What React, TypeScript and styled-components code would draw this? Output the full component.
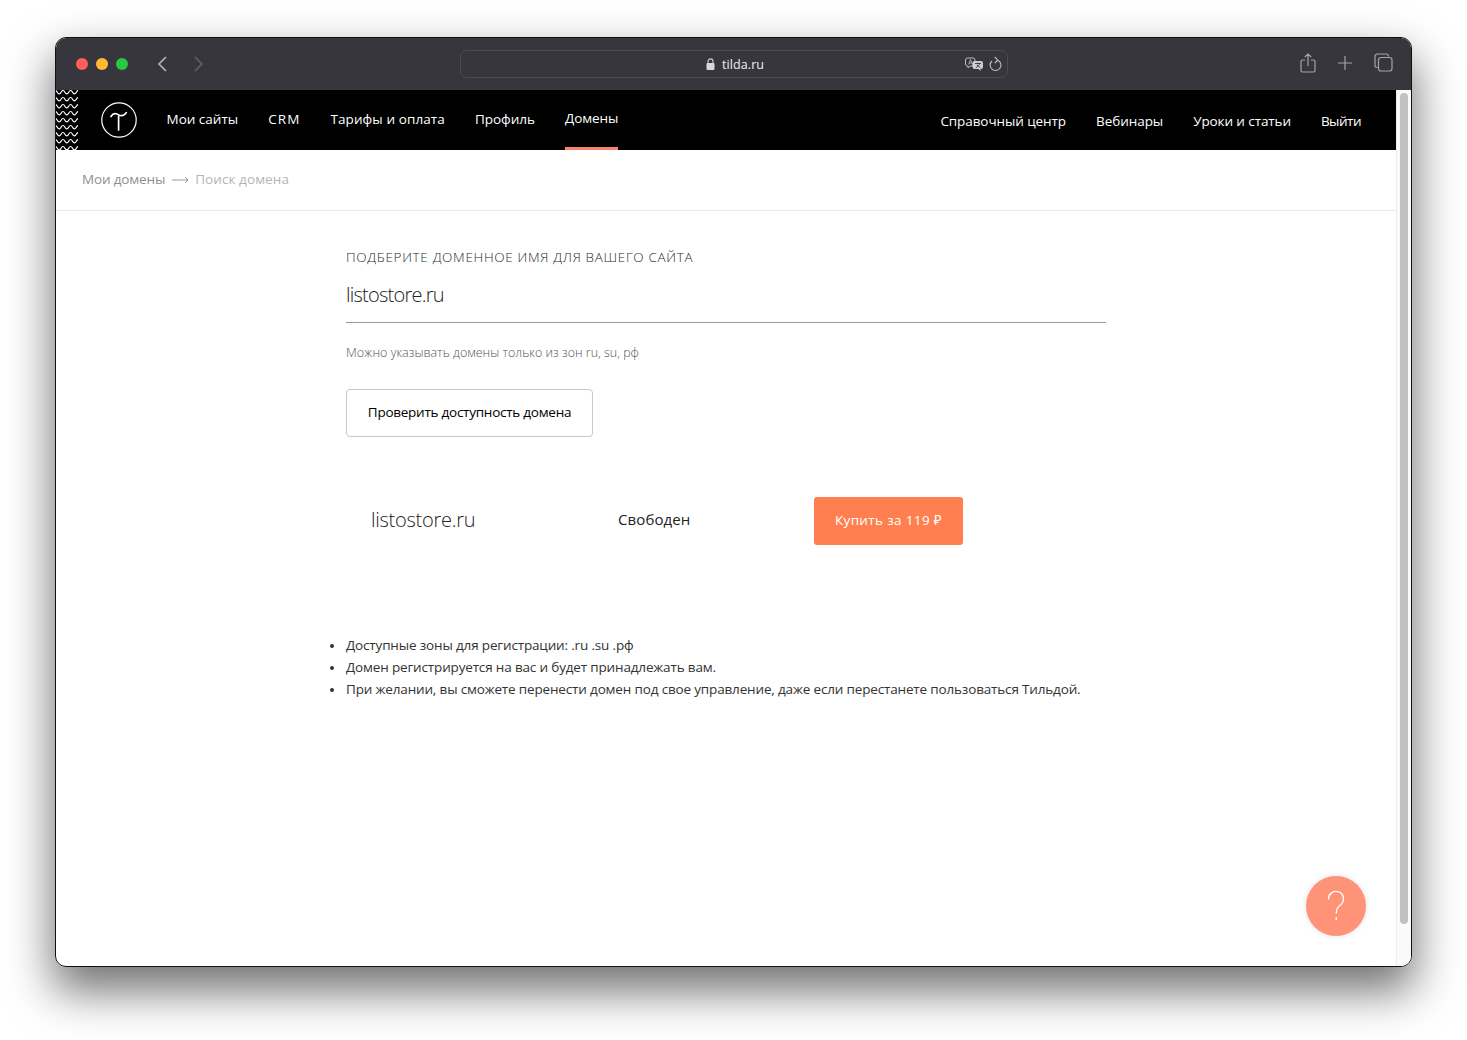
import React from 'react';
import styled, { createGlobalStyle } from 'styled-components';

const Global = createGlobalStyle`
  html, body { margin: 0; padding: 0; background: #fff; }
  body { font-family: "Open Sans", "Noto Sans", sans-serif; }
  * { box-sizing: border-box; }
`;
const font = `"Open Sans", "Noto Sans", sans-serif`;

const Page = styled.div`
  width: 1467px; height: 1040px; padding: 37px 55px 73px; overflow: hidden; background: #fff;
`;
const Win = styled.div`
  position: relative; width: 1357px; height: 930px; border-radius: 11px; overflow: hidden;
  border: 1px solid #111; background: #fff;
`;
const Shadow = styled.div`
  width: 1357px; height: 930px; border-radius: 11px;
  box-shadow: 0 22px 46px 2px rgba(0,0,0,.56);
`;
const TitleBar = styled.div`
  height: 52px; background: #38363d; display: grid; grid-template-columns: 404px 548px 1fr; align-items: center;
`;
const Left = styled.div`display: flex; align-items: center; padding-left: 20px;`;
const Dot = styled.span<{ $c: string }>`
  width: 12px; height: 12px; border-radius: 50%; background: ${p => p.$c}; margin-right: 8px;
`;
const NavArrows = styled.div`display: flex; gap: 19px; margin-left: 19px; margin-bottom: 1px;`;
const UrlBar = styled.div`
  height: 28px; border: 1px solid #4d4b52; border-radius: 7px; display: flex; align-items: center;
  position: relative; justify-content: center; color: #f1f1f1; font: 500 12.5px ${font};
`;
const UrlCenter = styled.div`display: flex; align-items: center; gap: 7px; margin-left: 2px; letter-spacing: .1px;`;
const UrlIcons = styled.div`position: absolute; right: 5px; top: 5px; display: flex; gap: 6px; align-items: center;`;
const Tools = styled.div`display: flex; align-items: center; justify-content: flex-end; gap: 22px; padding: 0 18px 3px 0;`;
const Body = styled.div`display: flex; height: 876px;`;
const Content = styled.div`flex: 1; min-width: 0; display: flex; flex-direction: column; position: relative;`;
const Scrollbar = styled.div`
  width: 15px; background: #fafafa; border-left: 1px solid #ececec; padding: 3px 3px 0 3px;
`;
const Thumb = styled.div`width: 8px; height: 831px; border-radius: 4px; background: #c1c1c1;`;
const TopNav = styled.nav`
  height: 60px; flex: none; background: #000; display: flex; align-items: center;
  padding-right: 35px; color: #fff; font: 500 13.5px ${font};
`;
const Waves = styled.svg`width: 22px; height: 60px; flex: none;`;
const Logo = styled.svg`width: 36px; height: 36px; margin: 0 30px 0 22.5px; flex: none;`;
const NavLeft = styled.div`display: flex; gap: 30px; height: 100%; flex: 1;`;
const NavRight = styled.div`display: flex; gap: 30px; height: 100%;`;
const NavItem = styled.a<{ $active?: boolean; $low?: boolean; $ls: number }>`
  position: relative; display: flex; align-items: center; padding-top: ${p => p.$low ? 2 : 0}px; padding-bottom: ${p => p.$low ? 0 : 2}px;
  white-space: nowrap; letter-spacing: ${p => p.$ls}px;
  border-bottom: ${p => p.$active ? '3px solid #fa8669' : '0'};
`;
const Crumbs = styled.div`
  height: 61px; flex: none; border-bottom: 1px solid #e8e8e8; display: flex; align-items: center; padding: 0 0 2px 26px;
  font: 500 13.5px ${font}; color: #8f8f8f; letter-spacing: -.15px;
`;
const CrumbArrow = styled.svg`width: 17px; height: 8px; margin: 1px 6px 0 7px;`;
const CrumbNow = styled.span`color: #b4b4b4; letter-spacing: .08px;`;
const Main = styled.main`padding: 36px 0 0 290px; flex: 1;`;
const Label = styled.div`
  font: 300 13.5px/20px ${font}; color: #2a2a2a; letter-spacing: .67px; text-transform: uppercase; white-space: nowrap;
`;
const Input = styled.div`
  width: 760px; height: 50px; border-bottom: 1px solid #9a9a9a; margin-top: 6px; padding-top: 7px;
  font: 300 20px/30px ${font}; color: #222; letter-spacing: -.75px;
`;
const Hint = styled.div`
  margin-top: 21px; font: 300 12.5px/18px ${font}; color: #555; letter-spacing: 0;
`;
const CheckBtn = styled.button`
  display: block; margin-top: 27px; width: 247px; height: 48px; background: #fff; border: 1px solid #c8c8c8; border-radius: 4px;
  font: 400 13.5px ${font}; color: #000; letter-spacing: -.25px; padding: 0 0 2px;
`;
const Result = styled.div`
  display: grid; grid-template-columns: 247px 196px 149px; align-items: center; margin-top: 60px; padding-left: 25px;
`;
const Domain = styled.div`font: 300 20px ${font}; color: #222; letter-spacing: -.25px; padding-bottom: 3px;`;
const Status = styled.div`font: 400 15px ${font}; color: #222; letter-spacing: .1px; padding-bottom: 5px;`;
const Buy = styled.button`
  height: 48px; width: 149px; background: #ff7f50; color: #fff; border: 0; border-radius: 3px; padding: 0 0 2px;
  font: 400 13.5px ${font}; letter-spacing: .35px;
`;
const Notes = styled.ul`
  margin: 89px 0 0; padding: 0; list-style: none; font: 400 13.5px/22px ${font}; color: #333; letter-spacing: -.16px;
`;
const Note = styled.li`
  position: relative; white-space: nowrap;
  &::before { content: ""; position: absolute; left: -16px; top: 10px; width: 4px; height: 4px; border-radius: 50%; background: #333; }
`;
const Fab = styled.div`
  position: absolute; right: 30px; top: 786px; width: 60px; height: 60px; border-radius: 50%; background: #ff9377;
  box-shadow: 0 0 6px rgba(0,0,0,.12); display: flex; align-items: center; justify-content: center;
`;

const wavePath = (y: number) => {
  const p = 7.6;
  let d = `M-.6 ${y}`;
  for (let x = -.6; x < 23; x += p) d += ` C${x + 1.9} ${y} ${x + 1.9} ${y + 3.4} ${x + p / 2} ${y + 3.4} S${x + p - 1.9} ${y} ${x + p} ${y}`;
  return d;
};

const leftItems: [string, number][] = [['Мои сайты', 0], ['CRM', 1.1], ['Тарифы и оплата', .1], ['Профиль', 0], ['Домены', -.1]];
const rightItems: [string, number][] = [['Справочный центр', -.08], ['Вебинары', -.05], ['Уроки и статьи', -.1], ['Выйти', -.5]];

export default function App() {
  return (
    <Page>
      <Global />
      <Shadow>
        <Win>
          <TitleBar>
            <Left>
              <Dot $c="#ff5f57" /><Dot $c="#febc2e" /><Dot $c="#28c840" />
              <NavArrows>
                <svg width="16" height="18" viewBox="0 0 16 18" fill="none" stroke="#b4b3b7" strokeWidth="1.7"><path d="M11 2 4 9l7 7" /></svg>
                <svg width="16" height="18" viewBox="0 0 16 18" fill="none" stroke="#626066" strokeWidth="1.7"><path d="M5 2l7 7-7 7" /></svg>
              </NavArrows>
            </Left>
            <UrlBar>
              <UrlCenter>
                <svg width="9" height="12" viewBox="0 0 9 12"><path d="M2 5V3.4a2.5 2.5 0 0 1 5 0V5" fill="none" stroke="#ccc" strokeWidth="1.1" /><rect x="0.5" y="5" width="8" height="7" rx="1" fill="#d8d8d8" /></svg>
                <span>tilda.ru</span>
              </UrlCenter>
              <UrlIcons>
                <svg width="18" height="14" viewBox="0 0 18 14" fill="none">
                  <path d="M2.500 1h5.500a2 2 0 0 1 2 2v4a2 2 0 0 1-2 2H5l-2 2v-2h-.5a2 2 0 0 1-2-2V3a2 2 0 0 1 2-2z" stroke="#bbb" />
                  <path d="M3.500 7.500l2-5 2 5M4.200 6h2.600" stroke="#bbb" strokeWidth=".8" />
                  <path d="M9.500 4h6.500a2 2 0 0 1 2 2v4a2 2 0 0 1-2 2h-.5v2l-2-2H9.500a2 2 0 0 1-2-2V6a2 2 0 0 1 2-2z" fill="#d0d0d0" />
                  <path d="M10 6.500h6M13 5.500v1M10.800 11l3.900-4M11.800 8l3.700 3" stroke="#38363d" strokeWidth=".9" />
                </svg>
                <svg width="13" height="16" viewBox="0 0 13 16" fill="none" stroke="#bdbdbd" strokeWidth="1.1">
                  <path d="M8.800 4.200A5.400 5.400 0 1 1 3 5" />
                  <path d="M5.800 1 8.800 4.200 5.800 7" />
                </svg>
              </UrlIcons>
            </UrlBar>
            <Tools>
              <svg width="16" height="20" viewBox="0 0 16 20" fill="none" stroke="#a5a4a8" strokeWidth="1.2"><path d="M5 7H2.500A1.500 1.500 0 0 0 1 8.500v9A1.500 1.500 0 0 0 2.500 19h11a1.500 1.500 0 0 0 1.500-1.500v-9A1.500 1.500 0 0 0 13.500 7H11M8 13V1M4.800 4 8 1l3.200 3" /></svg>
              <svg width="14" height="14" viewBox="0 0 14 14" fill="none" stroke="#a5a4a8" strokeWidth="1.2"><path d="M7 0v14M0 7h14" /></svg>
              <svg width="19" height="19" viewBox="0 0 19 19" fill="none" stroke="#a5a4a8" strokeWidth="1.2"><path d="M3.500 14.500A2.500 2.500 0 0 1 1 13V3.500A2.500 2.500 0 0 1 3.500 1H13a2.500 2.500 0 0 1 1.500 2.500" /><rect x="4.500" y="4.500" width="13.500" height="13.500" rx="2.500" /></svg>
            </Tools>
          </TitleBar>
          <Body>
            <Content>
              <TopNav>
                <Waves viewBox="0 0 22 60" fill="none" stroke="#fff" strokeWidth="1.2">
                  {Array.from({ length: 9 }).map((_, i) => <path key={i} d={wavePath(i * 7 + .5)} />)}
                </Waves>
                <Logo viewBox="0 0 36 36" fill="none" stroke="#fff">
                  <circle cx="18" cy="18" r="17.200" strokeWidth="1.200" />
                  <path d="M10 14.500C11.500 12 13 11.300 15 11.800c2 .5 3.500 1.800 5.500 1.800 2 0 3.500-1 4.800-3M17.600 14.500V28" strokeWidth="1.700" strokeLinecap="round" />
                </Logo>
                <NavLeft>
                  {leftItems.map(([t, ls]) => <NavItem key={t} $ls={ls} $active={t === 'Домены'}>{t}</NavItem>)}
                </NavLeft>
                <NavRight>
                  {rightItems.map(([t, ls]) => <NavItem key={t} $ls={ls} $low>{t}</NavItem>)}
                </NavRight>
              </TopNav>
              <Crumbs>
                <span>Мои домены</span>
                <CrumbArrow viewBox="0 0 17 8" fill="none" stroke="#999" strokeWidth="1"><path d="M0 4h16M13 1l3 3-3 3" /></CrumbArrow>
                <CrumbNow>Поиск домена</CrumbNow>
              </Crumbs>
              <Main>
                <Label>Подберите доменное имя для вашего сайта</Label>
                <Input>listostore.ru</Input>
                <Hint>Можно указывать домены только из зон ru, su, рф</Hint>
                <CheckBtn>Проверить доступность домена</CheckBtn>
                <Result>
                  <Domain>listostore.ru</Domain>
                  <Status>Свободен</Status>
                  <Buy>Купить за 119 ₽</Buy>
                </Result>
                <Notes>
                  <Note>Доступные зоны для регистрации: .ru .su .рф</Note>
                  <Note>Домен регистрируется на вас и будет принадлежать вам.</Note>
                  <Note>При желании, вы сможете перенести домен под свое управление, даже если перестанете пользоваться Тильдой.</Note>
                </Notes>
              </Main>
              <Fab>
                <svg width="20" height="30" viewBox="0 0 20 30" fill="none" stroke="#fff" strokeWidth="1.300"><path d="M2.500 8.500a7.500 7.500 0 1 1 12.500 5c-3 2.300-4.800 4-4.800 9M10.200 26v3" /></svg>
              </Fab>
            </Content>
            <Scrollbar><Thumb /></Scrollbar>
          </Body>
        </Win>
      </Shadow>
    </Page>
  );
}
